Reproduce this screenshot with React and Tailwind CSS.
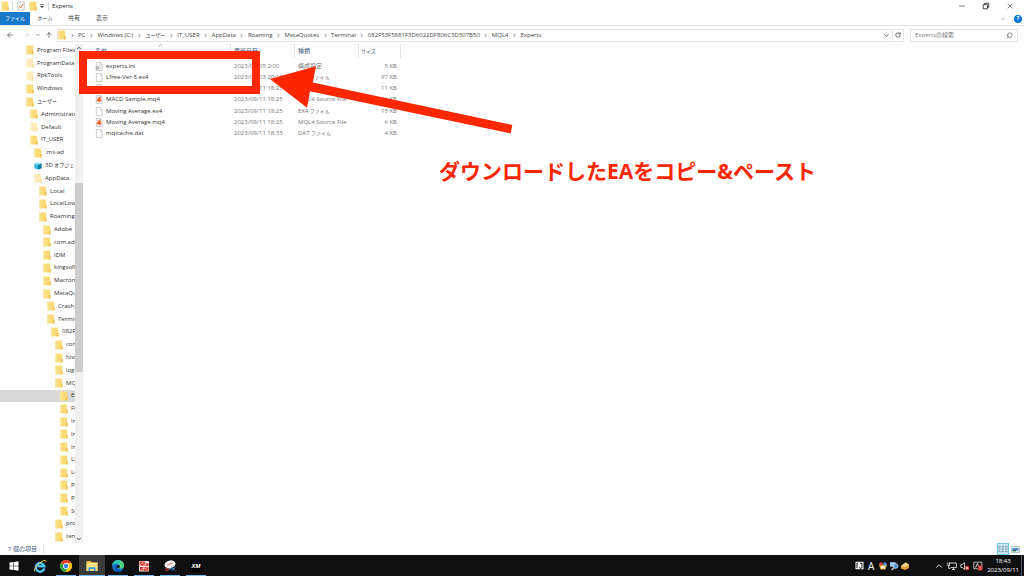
import { ArrowLeft, ArrowRight, ArrowUp, ChevronDown, ChevronRight, ChevronUp, Minus, RotateCw, Search, X } from "lucide-react"

const TREE = [
  { name: "Program Files", level: 0 },
  { name: "ProgramData", level: 0, faded: true },
  { name: "RpkTools", level: 0, faded: true },
  { name: "Windows", level: 0 },
  { name: "ユーザー", level: 0 },
  { name: "Administrator", level: 1 },
  { name: "Default", level: 1, faded: true },
  { name: "IT_USER", level: 1 },
  { name: ".ms-ad", level: 2 },
  { name: "3D オブジェクト", level: 2, icon: "cube" },
  { name: "AppData", level: 2, faded: true },
  { name: "Local", level: 3 },
  { name: "LocalLow", level: 3 },
  { name: "Roaming", level: 3 },
  { name: "Adobe", level: 4 },
  { name: "com.adobe", level: 4 },
  { name: "IDM", level: 4 },
  { name: "kingsoft", level: 4 },
  { name: "Macromedia", level: 4 },
  { name: "MetaQuotes", level: 4 },
  { name: "Crash", level: 5 },
  { name: "Terminal", level: 5 },
  { name: "082F53F5", level: 6 },
  { name: "config", level: 7 },
  { name: "history", level: 7 },
  { name: "logs", level: 7 },
  { name: "MQL4", level: 7 },
  { name: "Experts", level: 8, selected: true },
  { name: "Files", level: 8 },
  { name: "Images", level: 8 },
  { name: "Include", level: 8 },
  { name: "Indicators", level: 8 },
  { name: "Libraries", level: 8 },
  { name: "Logs", level: 8 },
  { name: "Presets", level: 8 },
  { name: "Projects", level: 8 },
  { name: "Scripts", level: 8 },
  { name: "profiles", level: 7 },
  { name: "templates", level: 7 },
]

const FILES = [
  { name: "experts.ini", date: "2023/09/05 2:00", type: "構成設定", size: "5 KB", icon: "ini" },
  { name: "Lfree-Ver-5.ex4", date: "2023/09/03 20:18", type: "EX4 ファイル", size: "97 KB" },
  { name: "MACD Sample.ex4", date: "2023/09/11 18:25", type: "EX4 ファイル", size: "11 KB" },
  { name: "MACD Sample.mq4", date: "2023/09/11 18:25", type: "MQL4 Source File", size: "6 KB", icon: "mq4" },
  { name: "Moving Average.ex4", date: "2023/09/11 18:25", type: "EX4 ファイル", size: "15 KB" },
  { name: "Moving Average.mq4", date: "2023/09/11 18:25", type: "MQL4 Source File", size: "6 KB", icon: "mq4" },
  { name: "mqlcache.dat", date: "2023/09/11 18:33", type: "DAT ファイル", size: "4 KB" },
]

const CRUMBS = [
  "PC",
  "Windows (C:)",
  "ユーザー",
  "IT_USER",
  "AppData",
  "Roaming",
  "MetaQuotes",
  "Terminal",
  "082F53F5881F3D6022DF806C3D307B50",
  "MQL4",
  "Experts",
]

// Kana are set one step smaller than the Latin text around them
function Label({ text }) {
  return text.split(/([ァ-ヶー]+)/).map((part, i) =>
    i % 2 ? <span key={i} className="text-[5px]">{part}</span> : part
  )
}

function FolderIcon({ faded, className = "h-2.5 w-2" }) {
  return (
    <svg viewBox="0 0 8 10" className={`shrink-0 ${className} ${faded ? "opacity-50" : ""}`}>
      <path d="M0.300 0.600h6.900v8.800H0.300z" fill="#fbdb78" />
      <path d="M0.300 0.600h1.200v8.800H0.300z" fill="#fce9a9" />
      <path d="M5.800 5.800h2V9.500H5.800z" fill="#f0c65a" />
    </svg>
  )
}

function CubeIcon() {
  return (
    <svg viewBox="0 0 9 10" className="h-2.5 w-2 shrink-0">
      <path d="M0.3 2.3 4.5 0.8 8.7 2.3 4.5 3.6z" fill="#8be4f4" />
      <path d="M0.3 2.3 4.5 3.6V9.2L0.3 7.6z" fill="#35bfdc" />
      <path d="M8.7 2.3 4.5 3.6V9.2L8.7 7.6z" fill="#0b80ad" />
    </svg>
  )
}

function FileIcon({ type }) {
  return (
    <svg viewBox="0 0 8 10" className="h-[9px] w-2 shrink-0">
      <path d="M1 0.5h4.6L7.4 2.3v7.2H1z" fill="#fff" stroke="#a3a3a3" strokeWidth="0.6" />
      <path d="M5.4 0.5v2h2" fill="none" stroke="#a3a3a3" strokeWidth="0.5" />
      {type === "ini" && (
        <>
          <path d="M4.5 4h2M4.5 5.5h2M4.5 7h2" stroke="#b5b5b5" strokeWidth="0.5" />
          <circle cx="2.3" cy="6.6" r="1.5" fill="#ddd" stroke="#808890" strokeWidth="0.9" />
        </>
      )}
      {type === "mq4" && (
        <>
          <path d="M1.600 2.200h5.200v5.600H1.600z" fill="#fbd3bd" />
          <path d="M4.900 8V2.800L2.300 6h4.200" fill="none" stroke="#ee5a1c" strokeWidth="1.200" />
        </>
      )}
    </svg>
  )
}

function TitleBar() {
  return (
    <header className="flex h-3 shrink-0 items-center justify-between">
      <div className="flex items-center text-[#222]">
        <FolderIcon className="mx-px h-2.5 w-2" />
        <span className="mx-[2px] h-2 w-px bg-gray-300" />
        <svg viewBox="0 0 8 10" className="ml-0.5 h-2.5 w-2">
          <path d="M0.8 1h6.4v8H0.8z" fill="#fff" stroke="#999" strokeWidth="0.6" />
          <path d="M2.2 5.2 3.7 7 6.2 3" fill="none" stroke="#ee6c35" strokeWidth="1" />
        </svg>
        <FolderIcon className="ml-1 h-2.5 w-2" />
        <svg viewBox="0 0 6 6" className="ml-0.5 size-1.5">
          <path d="M1 1.6h4" stroke="#333" strokeWidth="0.7" />
          <path d="M1 3h4L3 5z" fill="#333" />
        </svg>
        <span className="mx-[3px] h-2 w-px bg-gray-300" />
        <h1 className="text-[6px]">Experts</h1>
      </div>
      <div className="flex items-center gap-4 pr-2.5 text-[#333]">
        <button aria-label="最小化"><Minus className="size-2" /></button>
        <button aria-label="元に戻す">
          <svg viewBox="0 0 8 8" className="size-2" fill="none" stroke="currentColor" strokeWidth="0.9">
            <path d="M1.2 2.6h4.2v4.2H1.2zM2.6 2.6V1.2h4.2v4.2H5.4" />
          </svg>
        </button>
        <button aria-label="閉じる"><X className="size-2" /></button>
      </div>
    </header>
  )
}

function RibbonTabs() {
  return (
    <nav className="flex h-[14px] shrink-0 items-center justify-between border-b border-gray-200 text-[#444]">
      <div className="flex h-full items-center">
        <button className="h-full w-[30px] bg-[#1979ca] text-[5px] text-white">ファイル</button>
        <button className="w-[30px] text-[5px]">ホーム</button>
        <button className="w-7 text-[6px]">共有</button>
        <button className="w-7 text-[6px]">表示</button>
      </div>
      <div className="flex items-center gap-2 pr-0.5">
        <button aria-label="リボンの展開"><ChevronDown className="size-1.5 text-gray-500" /></button>
        <button aria-label="ヘルプ" className="flex size-2 items-center justify-center rounded-full bg-[#0b78d4] text-[6px] font-bold text-white">?</button>
      </div>
    </nav>
  )
}

function AddressBar() {
  return (
    <div className="flex h-[18px] shrink-0 items-center pr-1.5 pl-1.5 text-[#444]">
      <button aria-label="戻る"><ArrowLeft className="size-2" /></button>
      <button aria-label="進む" className="ml-2 text-gray-300"><ArrowRight className="size-2" /></button>
      <button aria-label="履歴" className="ml-[5px]"><ChevronDown className="size-1.5" /></button>
      <button aria-label="上へ" className="ml-1"><ArrowUp className="size-2" /></button>
      <div className="ml-1 flex h-[13px] flex-1 items-center border border-gray-200">
        <FolderIcon />
        <div className="flex flex-1 items-center whitespace-nowrap">
          {CRUMBS.map((crumb) => (
            <div key={crumb} className="flex items-center">
              <span className="flex w-3 justify-center"><ChevronRight className="size-[5px]" strokeWidth={3} /></span>
              <a href="#" className="text-[6px]"><Label text={crumb} /></a>
            </div>
          ))}
        </div>
        <button aria-label="前の場所" className="px-0.5"><ChevronDown className="size-[7px]" strokeWidth={3} /></button>
        <button aria-label="更新" className="flex h-full w-[11px] items-center justify-center border-l border-gray-200">
          <RotateCw className="size-1.5" strokeWidth={3} />
        </button>
      </div>
      <label className="ml-1.5 flex h-[13px] w-[108px] items-center border border-gray-200 px-1">
        <input
          type="search"
          aria-label="Expertsの検索"
          placeholder="Expertsの検索"
          className="min-w-0 flex-1 text-[6px] outline-none placeholder:text-[#777]"
        />
        <Search className="size-[7px] -scale-x-100" />
      </label>
    </div>
  )
}

function FolderTree() {
  return (
    <aside className="flex w-[83px] shrink-0">
      <ul className="flex min-w-0 flex-1 flex-col overflow-hidden">
        {TREE.map((node, i) => (
          <li key={i} className={`flex min-h-0 flex-1 ${node.selected ? "bg-[#d9d9d9]" : ""}`}>
            <button
              className="flex min-w-0 flex-1 items-center gap-[3px] overflow-hidden whitespace-nowrap"
              style={{ paddingLeft: Math.round(26 + node.level * 4.2) }}
            >
              {node.icon === "cube" ? <CubeIcon /> : <FolderIcon faded={node.faded} />}
              <span className="text-[6px]"><Label text={node.name} /></span>
            </button>
          </li>
        ))}
      </ul>
      <div className="flex w-2 flex-col items-center bg-[#f0f0f0] text-[#444]">
        <ChevronUp className="my-px size-1.5 shrink-0" strokeWidth={4} />
        <div className="flex min-h-0 w-full flex-1 flex-col">
          <div className="flex-[131]" />
          <div className="flex-[189] bg-[#cdcdcd]" />
          <div className="flex-[163]" />
        </div>
        <ChevronDown className="my-px size-1.5 shrink-0" strokeWidth={4} />
      </div>
    </aside>
  )
}

function ColumnHeader({ children, className = "" }) {
  return (
    <th className="p-0 pb-[3px] align-top font-normal">
      <div className={`flex h-[14px] items-center border-r border-gray-200 text-left text-[#4c607a] ${className}`}>{children}</div>
    </th>
  )
}

function FileList() {
  return (
    <main className="min-w-0 flex-1">
      <table className="h-[95px] w-[318px] table-fixed border-collapse whitespace-nowrap text-[6px]">
        <colgroup>
          <col className="w-[148px]" />
          <col className="w-16" />
          <col className="w-16" />
          <col className="w-[42px]" />
        </colgroup>
        <thead>
          <tr className="h-[17px]">
            <ColumnHeader className="relative pl-3">
              名前
              <ChevronUp className="absolute -top-0.5 left-[74px] size-[7px] text-gray-500" />
            </ColumnHeader>
            <ColumnHeader className="pl-[3px]">更新日時</ColumnHeader>
            <ColumnHeader className="pl-[3px]">種類</ColumnHeader>
            <ColumnHeader className="pl-0.5"><Label text="サイズ" /></ColumnHeader>
          </tr>
        </thead>
        <tbody className="text-[#777]">
          {FILES.map((file) => (
            <tr key={file.name}>
              <td className="p-0 pl-3 text-[#333]">
                <div className="flex items-center gap-[3px]">
                  <FileIcon type={file.icon} />
                  {file.name}
                </div>
              </td>
              <td className="p-0 pl-[3px]">{file.date}</td>
              <td className="p-0 pl-[3px]"><Label text={file.type} /></td>
              <td className="p-0 pr-1 text-right">{file.size}</td>
            </tr>
          ))}
        </tbody>
      </table>
    </main>
  )
}

function StatusBar() {
  return (
    <footer className="flex h-3 shrink-0 items-center justify-between pr-1 pl-2 text-[6px] text-[#4c607a]">
      <span className="border-r border-gray-200 pr-1.5">7 個の項目</span>
      <div className="flex items-center gap-0.5">
        <button aria-label="詳細" className="flex h-3 w-3 items-center justify-center border border-[#6cc5ee] bg-[#cbe9f8]">
          <svg viewBox="0 0 10 8" className="h-2 w-2.5" stroke="#6b8494" strokeWidth="0.8">
            <path d="M0.5 1.3h2M3.5 1.3h2.500M7 1.300h2.500M0.5 3h2M3.5 3h2.500M7 3h2.500M0.5 4.8h2M3.5 4.8h2.500M7 4.800h2.500M0.5 6.6h2M3.5 6.6h2.500M7 6.600h2.500" />
          </svg>
        </button>
        <button aria-label="大アイコン">
          <svg viewBox="0 0 9 7" className="h-[7px] w-[9px]">
            <path d="M0.5 0.5h8v6h-8z" fill="#eaf3fa" stroke="#8da2b3" strokeWidth="0.6" />
            <path d="M1.5 2h6v2.6h-6z" fill="#4d8fc4" />
            <path d="M1.5 4h3.5v1.3H1.5z" fill="#345b44" />
          </svg>
        </button>
      </div>
    </footer>
  )
}

function WindowsLogo() {
  return (
    <svg viewBox="0 0 12 12" className="size-3" fill="#fff">
      <path d="M1.5 2.6 5.5 2v3.7h-4zM6 1.9 10.5 1.3v4.4H6zM1.5 6.2h4V10l-4-.6zM6 6.2h4.5v4.5L6 10z" />
    </svg>
  )
}

function IeLogo() {
  return (
    <svg viewBox="0 0 14 14" className="size-3.5">
      <path d="M11.300 9.400A4.300 4.300 0 1 1 11.300 7.300H4.500" fill="none" stroke="#4cc2f2" strokeWidth="2.400" />
      <path d="M2 12.600C0 11 4 5.400 8.500 2.700 11 1.200 13.200 0.800 13 3" fill="none" stroke="#f5c534" strokeWidth="1" />
    </svg>
  )
}

function ChromeLogo() {
  return (
    <svg viewBox="0 0 14 14" className="size-3.5">
      <circle cx="7" cy="7" r="6" fill="#fbc116" />
      <path d="M7 7 1.8 4A6 6 0 0 1 12.200 4z" fill="#e33b2e" />
      <path d="M7 7 1.800 4A6 6 0 0 0 6.500 13l2.600-4.500z" fill="#26a148" />
      <path d="M7 4h5.200A6 6 0 0 1 6.500 13L9.600 8.500z" fill="#fbc116" />
      <circle cx="7" cy="7" r="2.900" fill="#fff" />
      <circle cx="7" cy="7" r="2.200" fill="#3b7de8" />
    </svg>
  )
}

function ExplorerLogo() {
  return (
    <svg viewBox="0 0 14 14" className="size-3.5">
      <path d="M1.500 2h4.500l1 1.200h5.500V12h-11z" fill="#e9b93f" />
      <path d="M1.500 4h11v8h-11z" fill="#fbdf85" />
      <path d="M3.500 12V8.200h7V12H8.800V10H5.200v2z" fill="#3e9fdc" />
    </svg>
  )
}

function EdgeLogo() {
  return (
    <svg viewBox="0 0 14 14" className="size-3.5">
      <circle cx="7" cy="7" r="6" fill="#1473c6" />
      <path d="M1.100 6.500C1.500 3.200 4 1 7 1c3.600 0 6 2.600 6 5.400 0 2-1.700 3-3.500 3-1.400 0-2-.6-1.400-1.400C8.800 6.600 7.400 4.600 5 4.700 3 4.800 1.500 5.700 1.100 6.500z" fill="#36c5b4" />
      <path d="M8 1.100c3.200.4 5 2.800 5 5.300 0 2-1.700 3-3.500 3-1.400 0-2-.6-1.400-1.400C9 6.500 10 3 8 1.100z" fill="#55d37b" />
      <path d="M5.200 6.500c-.6 2.600 1.200 5 4 5 1.200 0 2.200-.4 3-1A6 6 0 0 1 7 13C4.500 12.500 3.200 8.500 5.200 6.500z" fill="#0c479b" />
      <circle cx="7.300" cy="7.500" r="1.500" fill="#101010" />
    </svg>
  )
}

function TerminalLogo() {
  return (
    <svg viewBox="0 0 12 12" className="size-3">
      <path d="M1 1h10v10.500H1z" fill="#f3e9e6" />
      <path d="M1.500 1.500h5.500v4H1.500zM7.500 3h3v3h-3zM2 7h3.500v3.500H2zM6 7.200h4.500v3.600H6z" fill="#d8322d" />
      <path d="M2 4.500 5 2.500 7.500 5 10.500 2M3 9.500 6 8l3 1.500" fill="none" stroke="#fff" strokeWidth="0.6" />
    </svg>
  )
}

function SnipLogo() {
  return (
    <svg viewBox="0 0 14 14" className="size-3.5">
      <ellipse cx="7" cy="5.400" rx="5.600" ry="3.900" fill="#f4f4f4" transform="rotate(-15 7 5.400)" />
      <path d="M4 6.300 9.500 4" stroke="#e08a84" strokeWidth="1.200" />
      <path d="M6 10.500 9.500 8.500M8.500 7.500l3 4M8.500 11l4-2.500" stroke="#3f8fd4" strokeWidth="1" />
      <circle cx="4" cy="10.500" r="1.300" fill="none" stroke="#d8433a" strokeWidth="0.900" />
    </svg>
  )
}

function XmLogo() {
  return (
    <span className="flex size-3 items-center justify-center bg-black text-[6px] leading-none font-bold text-white italic">
      XM
    </span>
  )
}

const APPS = [
  { name: "スタート", Logo: WindowsLogo },
  { name: "Internet Explorer", Logo: IeLogo },
  { name: "Google Chrome", Logo: ChromeLogo, running: true },
  { name: "エクスプローラー", Logo: ExplorerLogo, running: true, active: true },
  { name: "Microsoft Edge", Logo: EdgeLogo, running: true },
  { name: "MetaTrader", Logo: TerminalLogo, running: true },
  { name: "Snipping Tool", Logo: SnipLogo, running: true },
  { name: "XM", Logo: XmLogo, running: true },
]

function Tray() {
  return (
    <div className="flex h-full items-center text-white">
      <div className="flex items-center gap-px">
        <svg viewBox="0 0 9 9" className="size-[9px]">
          <path d="M0.500 0.800h8v7.400h-8z" fill="#fff" />
          <path d="M2 2v5M3.200 2.200H2M5 2.200h2V5.500A1.300 1.300 0 0 1 4.300 6.300" fill="none" stroke="#111" strokeWidth="1" />
        </svg>
        <span className="w-3 text-center text-[10px] leading-none">A</span>
        <svg viewBox="0 0 10 10" className="size-2.5">
          <path d="M1 3.500h8L7.500 8.500h-5z" fill="#e9b24a" />
          <circle cx="3" cy="3" r="1.800" fill="#dd4438" />
          <circle cx="7" cy="3" r="1.800" fill="#4a8fd9" />
          <path d="M3 5h4v2.500H3z" fill="#f8f1d8" />
        </svg>
        <svg viewBox="0 0 10 10" className="size-2.5">
          <path d="M1 1.200h5.500v4.500H1z" fill="#9bc8ec" />
          <circle cx="6.500" cy="5" r="2.400" fill="#4b93d2" stroke="#d7e9f7" strokeWidth="0.7" />
          <path d="M2.500 9 5 6.500" stroke="#c9d4dd" strokeWidth="1.200" />
        </svg>
        <svg viewBox="0 0 10 10" className="size-2.5">
          <path d="M1 5 5.500 1.500 9 3.500V7L5 9 1 7.500z" fill="#dfa13c" />
          <path d="M1 5 5.500 1.500 9 3.500 5 6z" fill="#f5d58d" />
        </svg>
      </div>
      <div className="ml-6 flex items-center gap-[3px]">
        <ChevronUp className="size-2.5" />
        <svg viewBox="0 0 10 10" className="size-2.5" fill="none" stroke="#fff" strokeWidth="0.800">
          <path d="M2.500 2h6.800v4.600H3.500M5 8.500h3M6.500 6.600v1.900M0.800 1.500v3h1.700v-3M1.700 4.500v3h1.500" />
        </svg>
        <svg viewBox="0 0 10 10" className="size-2.5">
          <path d="M0.800 3.500h1.500L4.500 1.500v7L2.300 6.500H0.800z" fill="none" stroke="#fff" strokeWidth="0.700" />
          <circle cx="7" cy="7" r="2.300" fill="#e23b35" />
          <path d="m6 6 2 2M8 6 6 8" stroke="#fff" strokeWidth="0.700" />
        </svg>
        <svg viewBox="0 0 10 10" className="size-2.5">
          <path d="M0.800 1.200h8v6.600h-8z" fill="none" stroke="#fff" strokeWidth="0.700" />
          <path d="M2.500 6.500 4.500 2.500 5.500 5" fill="none" stroke="#fff" strokeWidth="0.800" />
          <path d="M5 4.500h4.500V9.500H5z" fill="#e02b2b" />
          <path d="M7.300 5.300v2.200M7.300 8.200v.7" stroke="#fff" strokeWidth="0.800" />
        </svg>
      </div>
      <div className="ml-1 flex h-full flex-col items-center justify-center text-[6px] leading-[9px]">
        <time>18:43</time>
        <time>2023/09/11</time>
      </div>
      <div className="ml-0.5 h-full w-[3px] border-l border-gray-600" />
    </div>
  )
}

function Taskbar() {
  return (
    <div className="flex h-[21px] shrink-0 items-stretch justify-between bg-[#101010]">
      <div className="flex pl-px">
        {APPS.map(({ name, Logo, running, active }) => (
          <button
            key={name}
            aria-label={name}
            className={`relative flex w-[26px] items-center justify-center ${active ? "bg-[#3a3a3a]" : ""}`}
          >
            <Logo />
            {running && (
              <span className={`absolute bottom-0 h-px bg-[#76b9ed] ${active ? "inset-x-0" : "inset-x-[3px]"}`} />
            )}
          </button>
        ))}
      </div>
      <Tray />
    </div>
  )
}

// Red frame, arrow and caption laid over the window
function Annotation() {
  return (
    <div className="pointer-events-none absolute inset-0 overflow-hidden">
      <div className="absolute top-[51px] left-[79px] h-[43px] w-[181px] border-8 border-[#ff2600]" />
      <svg viewBox="0 0 250 80" className="absolute top-[62px] left-[268px] h-20 w-[250px]" fill="#ff2600">
        <path d="M2 17 48 4.300 44.800 20.600 244.300 63 242.600 71.400 42 29.300 39 45.700z" />
      </svg>
      <p className="absolute top-[158px] left-[439px] text-[21px] leading-[26px] font-bold whitespace-nowrap text-[#ff2600]">
        ダウンロードしたEAをコピー&amp;ペースト
      </p>
    </div>
  )
}

export default function App() {
  return (
    <div className="relative flex h-screen flex-col overflow-hidden bg-white font-['Open_Sans','Noto_Sans_CJK_JP',sans-serif] text-[6px] leading-[9px] text-[#333]">
      <TitleBar />
      <RibbonTabs />
      <AddressBar />
      <div className="flex min-h-0 flex-1">
        <FolderTree />
        <FileList />
      </div>
      <StatusBar />
      <Taskbar />
      <Annotation />
    </div>
  )
}
